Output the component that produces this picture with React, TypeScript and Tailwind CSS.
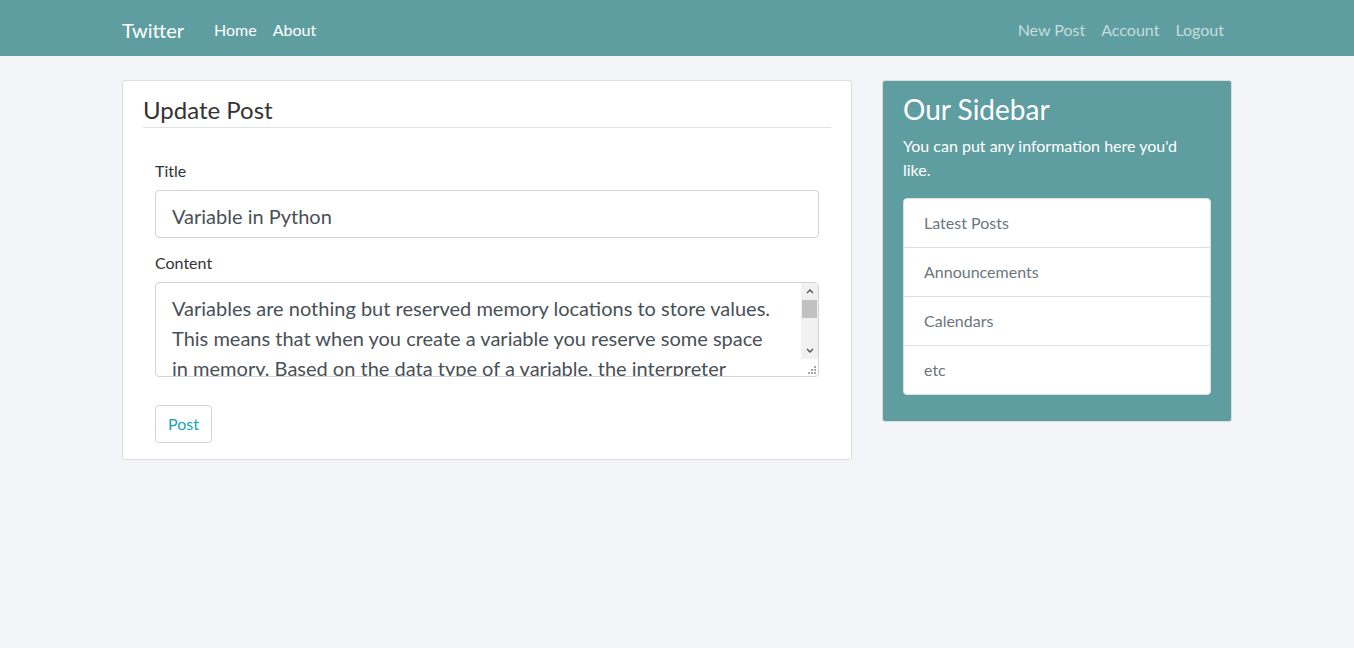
export default function App() {
  const sidebarLinks = ["Latest Posts", "Announcements", "Calendars", "etc"]

  return (
    <div
      className="min-h-screen bg-[#f4f5f9] text-[#333333]"
      style={{ fontFamily: "Lato, 'Noto Sans', sans-serif" }}
    >
      {/* navbar */}
      <header className="h-14 bg-[#5f9ea0]">
        <div className="mx-auto flex h-full w-[1140px] items-center px-[15px] pt-1">
          <a className="w-[84px] text-xl text-white">Twitter</a>
          <nav className="flex text-base text-white">
            <a className="px-2">Home</a>
            <a className="px-2">About</a>
          </nav>
          <nav className="ml-auto flex text-base text-[#c4dcdd]">
            <a className="px-2">New Post</a>
            <a className="px-2">Account</a>
            <a className="px-2">Logout</a>
          </nav>
        </div>
      </header>

      <main className="mx-auto flex w-[1140px] pt-6">
        {/* form column */}
        <div className="w-[760px] px-[15px]">
          <div className="rounded-[3px] border border-[#dddddd] bg-white px-5 pb-4 pt-[10px]">
            <h2 className="border-b border-[#dee2e6] pt-px text-2xl leading-[35px]">Update Post</h2>
            <form className="px-3 pt-[31px]">
              <label className="mb-[7px] block text-base leading-6">Title</label>
              <input
                className="block h-12 w-full rounded border border-[#ced4da] px-4 pt-[3px] text-xl text-[#495057] outline-none"
                defaultValue="Variable in Python"
              />
              <label className="mb-[7px] mt-[13px] block text-base leading-6">Content</label>
              <div className="relative">
                <textarea
                  className="block h-[95px] w-full resize-none overflow-hidden rounded border border-[#ced4da] py-[10px] pl-4 pr-[37px] text-xl leading-[30px] text-[#495057] outline-none"
                  defaultValue="Variables are nothing but reserved memory locations to store values. This means that when you create a variable you reserve some space in memory. Based on the data type of a variable, the interpreter allocates memory and decides what can be stored in the reserved memory. Therefore, by assigning different data types to variables, you can store integers, decimals or characters in these variables."
                />
                {/* fake scrollbar (headless hides native ones) */}
                <div className="pointer-events-none absolute right-px top-px flex h-[76px] w-[17px] flex-col bg-[#f1f1f1]">
                  <div className="flex h-[17px] items-center justify-center">
                    <svg className="h-[5px] w-[8px]" viewBox="0 0 8 5">
                      <path d="M1 4 L4 1 L7 4" fill="none" stroke="#505050" strokeWidth="1.4" />
                    </svg>
                  </div>
                  <div className="mx-px h-[18px] bg-[#c1c1c1]" />
                  <div className="flex-1" />
                  <div className="flex h-[17px] items-center justify-center">
                    <svg className="h-[5px] w-[8px]" viewBox="0 0 8 5">
                      <path d="M1 1 L4 4 L7 1" fill="none" stroke="#505050" strokeWidth="1.4" />
                    </svg>
                  </div>
                </div>
                {/* resize grip */}
                <svg className="pointer-events-none absolute bottom-[3px] right-[3px] h-[9px] w-[9px]" viewBox="0 0 9 9">
                  <g fill="#a6a6a6">
                    <rect x="7" y="1" width="2" height="2" />
                    <rect x="4" y="4" width="2" height="2" />
                    <rect x="7" y="4" width="2" height="2" />
                    <rect x="1" y="7" width="2" height="2" />
                    <rect x="4" y="7" width="2" height="2" />
                    <rect x="7" y="7" width="2" height="2" />
                  </g>
                </svg>
              </div>
              <button
                type="button"
                className="mt-7 rounded border border-[#cfd4da] bg-white px-3 py-1.5 text-base leading-6 text-[#17a2b8]"
              >
                Post
              </button>
            </form>
          </div>
        </div>

        {/* sidebar */}
        <div className="w-[380px] px-[15px]">
          <div className="rounded-[3px] border border-[#dddddd] bg-[#5f9ea0] px-5 pb-[10px] pt-[10px] text-white">
            <h3 className="mb-2 pt-px text-[28px] leading-[34px]">Our Sidebar</h3>
            <p className="mb-4 pr-[24px] text-base leading-6">You can put any information here you'd like.</p>
            <ul className="mb-4 overflow-hidden rounded border border-[#dfdfdf] bg-white">
              {sidebarLinks.map((item, i) => (
                <li
                  key={item}
                  className={`px-5 py-3 text-base leading-6 text-[#6c757d] ${i > 0 ? "border-t border-[#dfdfdf]" : ""}`}
                >
                  {item}
                </li>
              ))}
            </ul>
          </div>
        </div>
      </main>
    </div>
  )
}
